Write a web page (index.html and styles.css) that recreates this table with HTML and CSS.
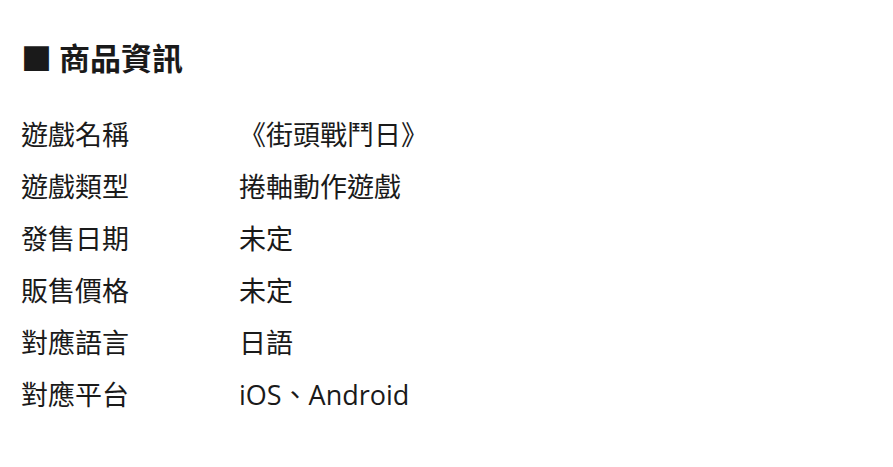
FILE: index.html
```html
<!DOCTYPE html>
<html lang="zh-Hant">
<head>
<meta charset="UTF-8">
<title>商品資訊</title>
<link rel="stylesheet" href="styles.css">
</head>
<body>
    <div id="product-info">
        <h2 class="title">■ 商品資訊</h2>
        <dl class="spec">
            <dt>遊戲名稱</dt>
            <dd>《街頭戰鬥日》</dd>
            <dt>遊戲類型</dt>
            <dd>捲軸動作遊戲</dd>
            <dt>發售日期</dt>
            <dd>未定</dd>
            <dt>販售價格</dt>
            <dd>未定</dd>
            <dt>對應語言</dt>
            <dd>日語</dd>
            <dt>對應平台</dt>
            <dd>iOS、Android</dd>
        </dl>
    </div>
</body>
</html>
```

FILE: styles.css
```css
* {
    margin: 0;
    padding: 0;
}
html, body {
    width: 100%;
    height: 100%;
    background-color: white;
}
body {
    font-family: "Open Sans", "Noto Sans CJK TC", sans-serif;
    color: #1a1a1a;
}

/* product info block */
#product-info {
    padding: 37px 21px 0;
}
#product-info .title {
    font-family: "Noto Sans CJK TC", sans-serif;
    font-size: 31px;
    font-weight: bold;
    line-height: 40px;
    margin-bottom: 32px;
}

/* spec list */
.spec {
    display: grid;
    grid-template-columns: 218px auto;
    font-size: 27px;
    line-height: 52px;
}
.spec dt, .spec dd {
    white-space: nowrap;
}
```
